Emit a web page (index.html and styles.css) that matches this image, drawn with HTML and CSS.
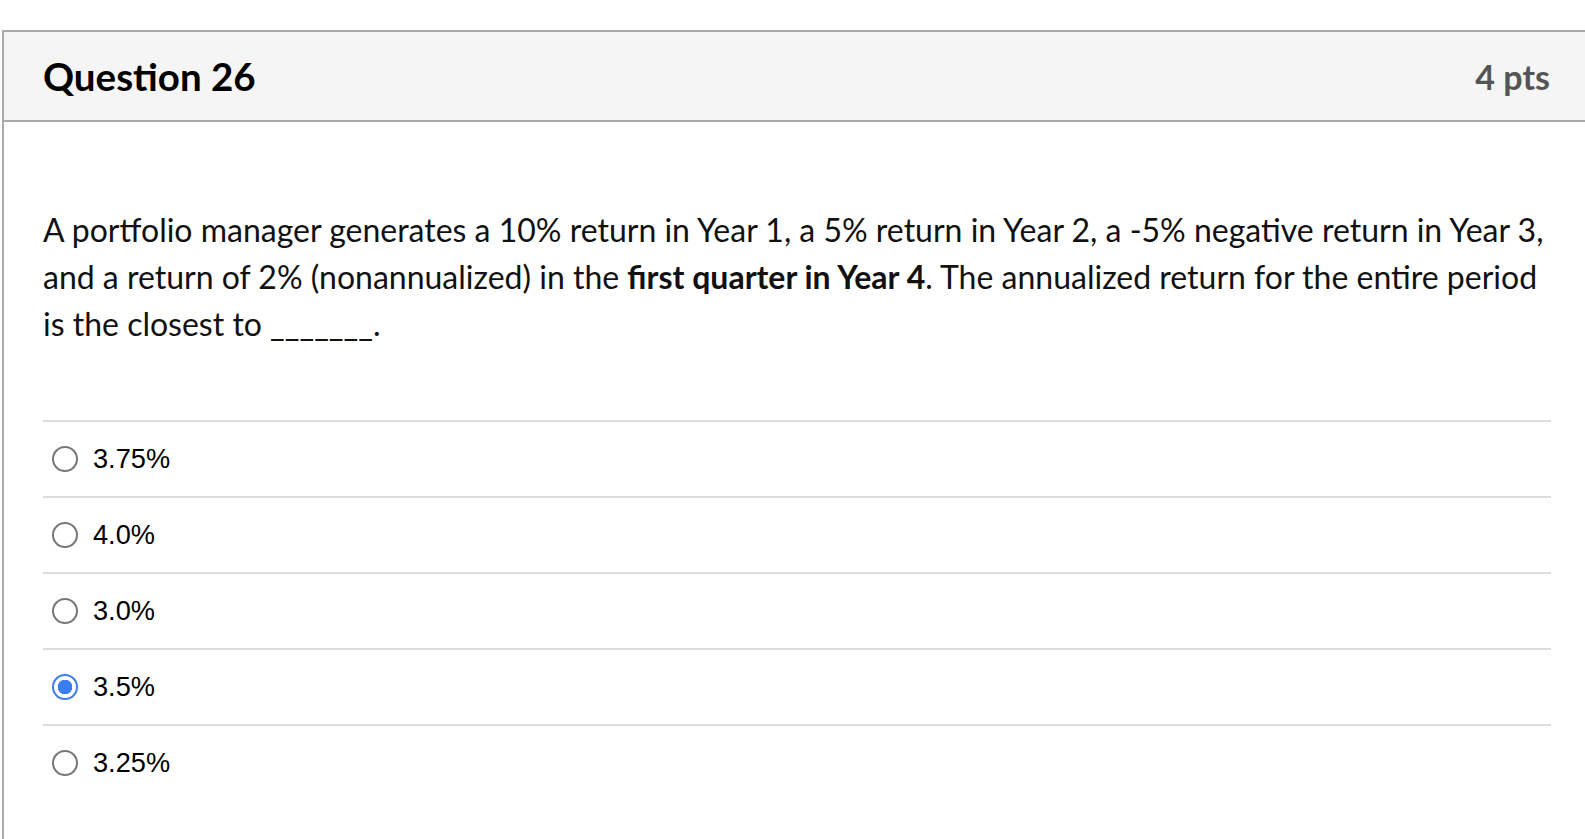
FILE: index.html
```html
<!DOCTYPE html>
<html>
<head>
<meta charset="utf-8">
<link rel="stylesheet" href="styles.css">
</head>
<body>
<div class="question">
  <div class="header">
    <span class="title">Question 26</span>
    <span class="points">4 pts</span>
  </div>
  <div class="content">
    <p class="text">A portfolio manager generates a 10% return in Year 1, a 5% return in Year 2, a -5% negative return in Year 3, and a return of 2% (nonannualized) in the <strong>first quarter in Year 4</strong>. The annualized return for the entire period is the closest to _______.</p>
    <div class="answers">
      <label class="answer"><span class="radio"></span><span class="label">3.75%</span></label>
      <label class="answer"><span class="radio"></span><span class="label">4.0%</span></label>
      <label class="answer"><span class="radio"></span><span class="label">3.0%</span></label>
      <label class="answer"><span class="radio checked"></span><span class="label">3.5%</span></label>
      <label class="answer"><span class="radio"></span><span class="label">3.25%</span></label>
    </div>
  </div>
</div>
</body>
</html>
```

FILE: styles.css
```css
html, body {
  margin: 0;
  padding: 0;
  overflow: hidden;
  background: #fff;
}

.question {
  margin: 30px 0 0 2px;
  width: 1586px;
  height: calc(100vh - 30px);
  border: 2px solid #aaa;
  border-bottom: 0;
  box-sizing: border-box;
  overflow: hidden;
  font-family: Lato, "Liberation Sans", sans-serif;
}

.header {
  display: flex;
  justify-content: space-between;
  align-items: center;
  height: 88px;
  background: #f5f5f5;
  border-bottom: 2px solid #aaa;
  padding: 0 36px 0 39px;
}

.title {
  font-weight: 700;
  font-size: 38.5px;
  color: #000;
}

.points {
  font-weight: 700;
  font-size: 34px;
  color: #555;
}

.content {
  padding: 84px 39px 0 39px;
  width: 1508px;
  box-sizing: content-box;
}

.text {
  margin: 0;
  font-size: 32px;
  line-height: 47px;
  color: #111;
}

.text strong {
  font-weight: 700;
}

.answers {
  margin-top: 73px;
}

.answer {
  display: flex;
  align-items: center;
  height: 74px;
  border-top: 2px solid #ddd;
  padding-left: 9px;
}

.radio {
  width: 26px;
  height: 26px;
  box-sizing: border-box;
  border: 2px solid #767676;
  border-radius: 50%;
  background: #fff;
  flex: none;
}

.radio.checked {
  border-color: #3b7cf2;
  background: radial-gradient(circle, #3b7cf2 0 7px, #fff 7.5px);
}

.label {
  margin-left: 15px;
  font-family: "Liberation Sans", Arial, sans-serif;
  font-size: 27.2px;
  color: #000;
}
```
